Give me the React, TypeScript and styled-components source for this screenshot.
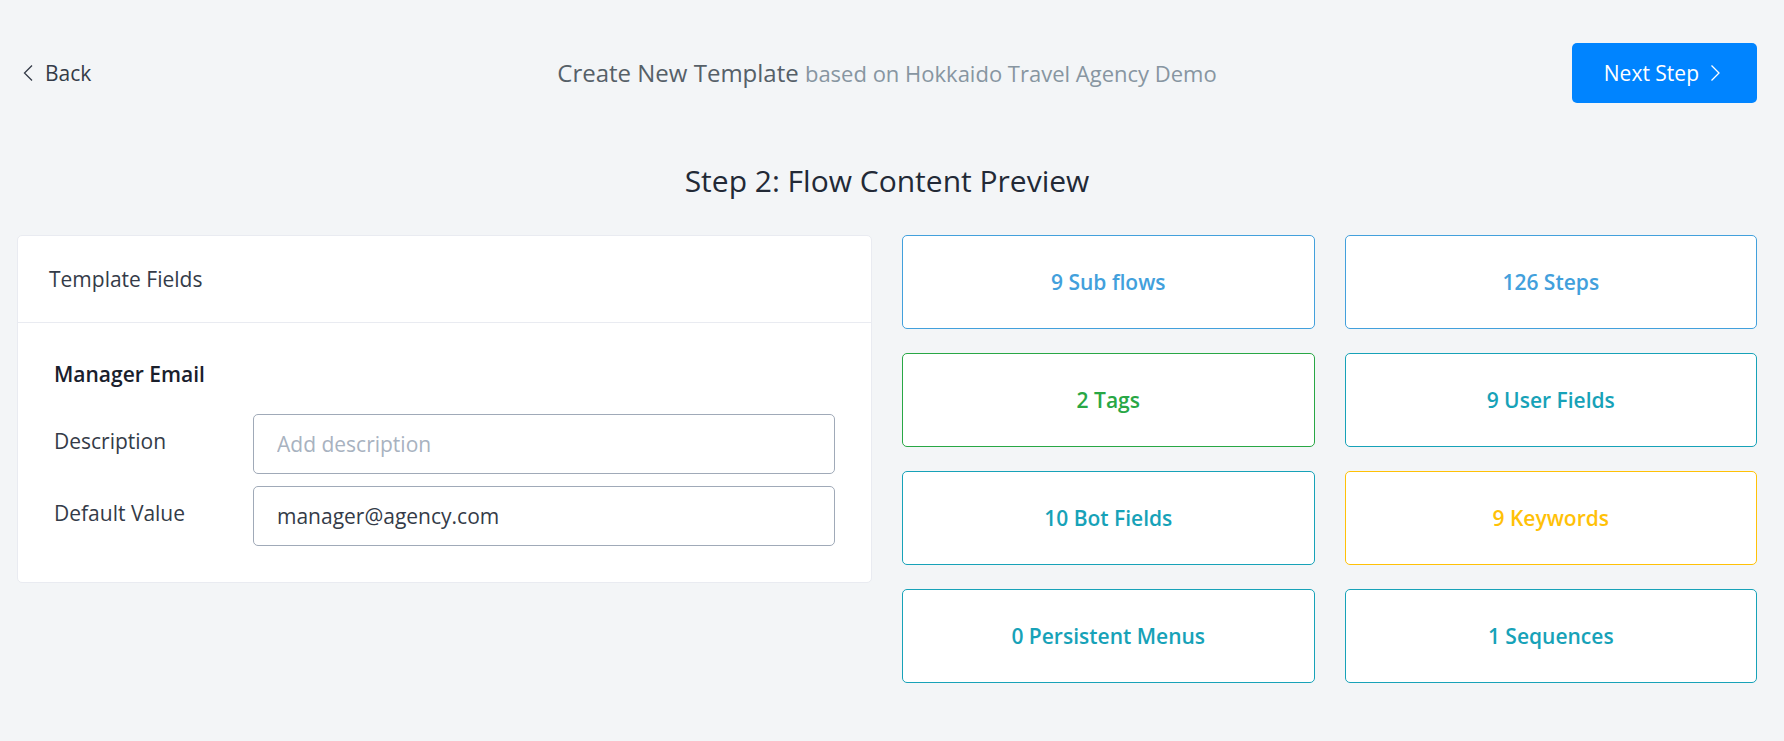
import React, { useState } from "react";
import styled, { createGlobalStyle } from "styled-components";

const GlobalStyle = createGlobalStyle`
  *, *::before, *::after { box-sizing: border-box; }
  body {
    margin: 0;
    background: #f3f5f7;
    color: #343b48;
    font-family: "Open Sans", "Noto Sans", sans-serif;
    font-size: 21px;
    font-weight: 400;
    line-height: 32px;
  }
  button, input { font: inherit; }
`;

const Page = styled.main`
  padding: 43px 27px 56px 17px;
`;

const TopBar = styled.header`
  display: grid;
  grid-template-columns: 1fr auto 1fr;
  align-items: center;
`;

const BackLink = styled.a`
  display: flex;
  align-items: center;
  justify-self: start;
  gap: 11px;
  padding-left: 6px;
  color: inherit;
  text-decoration: none;
`;

const PageTitle = styled.h1`
  margin: 0;
  color: #566068;
  font-size: 24px;
  font-weight: 400;
`;

const SourceName = styled.small`
  color: #8795a1;
  font-size: 22px;
`;

const NextButton = styled.button`
  display: flex;
  align-items: center;
  justify-self: end;
  gap: 11px;
  height: 60px;
  padding: 0 36px 0 32px;
  border: 0;
  border-radius: 5px;
  background: #0084ff;
  color: #fff;
  font-weight: 400;
  cursor: pointer;
`;

const StepTitle = styled.h2`
  margin: 56px 0 32px;
  color: #222936;
  font-size: 30px;
  font-weight: 400;
  line-height: 44px;
  text-align: center;
`;

const Columns = styled.div`
  display: grid;
  grid-template-columns: 1fr 1fr;
  align-items: start;
  gap: 30px;
`;

const Card = styled.section`
  border: 1px solid #e9ebf1;
  border-radius: 5px;
  background: #fff;
`;

const CardHeader = styled.h3`
  margin: 0;
  padding: 27px 31px;
  border-bottom: 1px solid #e9ebf1;
  font-size: 21px;
  font-weight: 400;
`;

const FieldGroup = styled.fieldset`
  display: grid;
  gap: 12px;
  margin: 0;
  padding: 35px 36px 36px;
  border: 0;
`;

const FieldName = styled.legend`
  float: left;
  margin-bottom: 12px;
  padding: 0;
  color: #1a202c;
  font-weight: 600;
`;

const FieldRow = styled.div`
  display: grid;
  grid-template-columns: 199px 1fr;
  align-items: start;
`;

const FieldLabel = styled.label`
  padding-top: 11px;
`;

const TextInput = styled.input`
  width: 100%;
  height: 60px;
  padding: 0 23px;
  border: 1px solid #a0aab8;
  border-radius: 5px;
  background: #fff;
  color: #343b48;
  &::placeholder { color: #a8b2c0; opacity: 1; }
`;

const Tiles = styled.div`
  display: grid;
  grid-template-columns: 1fr 1fr;
  gap: 24px 30px;
`;

const Tile = styled.button<{ $color: string }>`
  height: 94px;
  padding: 0 16px;
  border: 1px solid ${(p) => p.$color};
  border-radius: 5px;
  background: #fff;
  color: ${(p) => p.$color};
  font-weight: 600;
  cursor: pointer;
`;

const Chevron = ({ d }: { d: string }) => (
  <svg width="11" height="18" viewBox="0 0 11 18" fill="none" stroke="currentColor" strokeWidth="1.3" aria-hidden="true">
    <path d={d} />
  </svg>
);

const BLUE = "#42a0dc";
const GREEN = "#28a745";
const TEAL = "#17a2b8";
const YELLOW = "#ffc107";

const tiles = [
  { label: "9 Sub flows", color: BLUE },
  { label: "126 Steps", color: BLUE },
  { label: "2 Tags", color: GREEN },
  { label: "9 User Fields", color: TEAL },
  { label: "10 Bot Fields", color: TEAL },
  { label: "9 Keywords", color: YELLOW },
  { label: "0 Persistent Menus", color: TEAL },
  { label: "1 Sequences", color: TEAL },
];

export default function App() {
  const [description, setDescription] = useState("");
  const [value, setValue] = useState("manager@agency.com");

  return (
    <>
      <GlobalStyle />
      <Page>
        <TopBar>
          <BackLink href="#back">
            <Chevron d="M9 1.5 1.5 9 9 16.5" />
            Back
          </BackLink>
          <PageTitle>
            Create New Template <SourceName>based on Hokkaido Travel Agency Demo</SourceName>
          </PageTitle>
          <NextButton type="button">
            Next Step
            <Chevron d="M1.5 1.5 9 9 1.5 16.5" />
          </NextButton>
        </TopBar>
        <StepTitle>Step 2: Flow Content Preview</StepTitle>
        <Columns>
          <Card>
            <CardHeader>Template Fields</CardHeader>
            <FieldGroup>
              <FieldName>Manager Email</FieldName>
              <FieldRow>
                <FieldLabel htmlFor="description">Description</FieldLabel>
                <TextInput
                  id="description"
                  placeholder="Add description"
                  value={description}
                  onChange={(e) => setDescription(e.target.value)}
                />
              </FieldRow>
              <FieldRow>
                <FieldLabel htmlFor="default-value">Default Value</FieldLabel>
                <TextInput id="default-value" value={value} onChange={(e) => setValue(e.target.value)} />
              </FieldRow>
            </FieldGroup>
          </Card>
          <Tiles>
            {tiles.map((tile) => (
              <Tile key={tile.label} type="button" $color={tile.color}>
                {tile.label}
              </Tile>
            ))}
          </Tiles>
        </Columns>
      </Page>
    </>
  );
}
